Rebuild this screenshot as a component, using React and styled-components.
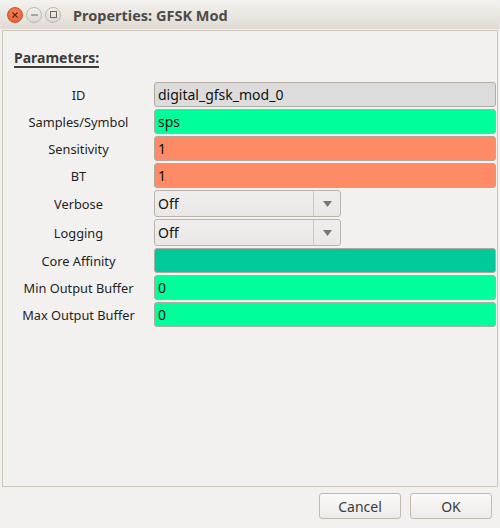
import React from 'react';
import styled, { createGlobalStyle } from 'styled-components';

const Global = createGlobalStyle`
  html, body {
    margin: 0;
    padding: 0;
    background: #f2f1f0;
    font-family: 'Noto Sans', 'DejaVu Sans', sans-serif;
  }
`;

const Window = styled.div`
  width: 500px;
  height: 528px;
  display: flex;
  flex-direction: column;
  background: #f2f1f0;
  overflow: hidden;
`;

const TitleBar = styled.div`
  height: 29px;
  display: flex;
  align-items: center;
  padding-left: 7px;
  background: linear-gradient(#f4f2ef, #dfdad3);
  border-radius: 5px 5px 0 0;
  box-sizing: border-box;
`;

const WinButton = styled.div`
  width: 16px;
  height: 16px;
  border-radius: 50%;
  margin-right: 3px;
  display: flex;
  align-items: center;
  justify-content: center;
  box-sizing: border-box;
  background: ${p => (p.close ? 'radial-gradient(circle at 50% 35%, #f7865d, #e1592c)' : 'linear-gradient(#f3f1ee, #dcd7d0)')};
  border: 1px solid ${p => (p.close ? '#c9532a' : '#bdb6ad')};
`;

const Title = styled.div`
  margin-left: 9px;
  font-weight: bold;
  font-size: 14.5px;
  color: #4d4b47;
`;

const Frame = styled.div`
  margin: 1px 2px 0 2px;
  height: 457px;
  border: 1px solid #cdc4ba;
  box-sizing: border-box;
  padding: 15px 0 0 0;
`;

const Heading = styled.div`
  margin-left: 11px;
  font-weight: bold;
  font-size: 14px;
  color: #3c3c3c;
  display: inline-block;
  border-bottom: 2px solid #3c3c3c;
  line-height: 16px;
`;

const Grid = styled.div`
  margin-top: 14px;
  display: grid;
  grid-template-columns: 151px 1fr;
  row-gap: 2px;
  padding-right: 1px;
`;

const Label = styled.div`
  font-size: 12.8px;
  color: #1f1f1f;
  display: flex;
  align-items: center;
  justify-content: center;
`;

const Field = styled.div`
  height: 25px;
  box-sizing: border-box;
  border: 1px solid #b2aaa1;
  border-radius: 3px;
  background: ${p => p.bg};
  font-size: 14px;
  color: #111;
  display: flex;
  align-items: center;
  padding-left: 3px;
`;

const Combo = styled.div`
  width: 187px;
  height: 27px;
  box-sizing: border-box;
  border: 1px solid #bcb4aa;
  border-radius: 3px;
  background: linear-gradient(#efeeec, #e9e8e6);
  display: flex;
  font-size: 14px;
  color: #111;
`;

const ComboText = styled.div`
  flex: 1;
  display: flex;
  align-items: center;
  padding-left: 3px;
  border-right: 1px solid #cfc8bf;
`;

const ComboArrow = styled.div`
  width: 26px;
  display: flex;
  align-items: center;
  justify-content: center;
`;

const Footer = styled.div`
  display: flex;
  justify-content: flex-end;
  gap: 9px;
  padding: 6px 8px 0 0;
`;

const Button = styled.button`
  width: 82px;
  height: 26px;
  border: 1px solid #c2bab0;
  border-radius: 3px;
  background: linear-gradient(#fbfafa, #edebe8);
  font-family: 'Noto Sans', 'DejaVu Sans', sans-serif;
  font-size: 14px;
  color: #3c3c3c;
  padding: 0;
`;

const Arrow = () => (
  <svg width="9" height="6" viewBox="0 0 9 6">
    <path d="M0 0 L9 0 L4.5 6 Z" fill="#7a7773" />
  </svg>
);

const rows = [
  { label: 'ID', value: 'digital_gfsk_mod_0', bg: '#dcdcdc' },
  { label: 'Samples/Symbol', value: 'sps', bg: '#00fe9a' },
  { label: 'Sensitivity', value: '1', bg: '#fe8a66' },
  { label: 'BT', value: '1', bg: '#fe8a66' },
  { label: 'Verbose', combo: 'Off' },
  { label: 'Logging', combo: 'Off' },
  { label: 'Core Affinity', value: '', bg: '#00c99a' },
  { label: 'Min Output Buffer', value: '0', bg: '#00fe9a' },
  { label: 'Max Output Buffer', value: '0', bg: '#00fe9a' },
];

export default function App() {
  return (
    <Window>
      <Global />
      <TitleBar>
        <WinButton close>
          <svg width="6" height="6" viewBox="0 0 6 6">
            <path d="M0.5 0.5 L5.5 5.5 M5.5 0.5 L0.5 5.5" stroke="#5a2410" strokeWidth="1.2" />
          </svg>
        </WinButton>
        <WinButton>
          <svg width="7" height="2" viewBox="0 0 7 2">
            <path d="M0 1 H7" stroke="#6a6660" strokeWidth="1" />
          </svg>
        </WinButton>
        <WinButton>
          <svg width="7" height="7" viewBox="0 0 7 7">
            <rect x="0.5" y="0.5" width="6" height="6" fill="none" stroke="#6a6660" strokeWidth="1" />
          </svg>
        </WinButton>
        <Title>Properties: GFSK Mod</Title>
      </TitleBar>
      <Frame>
        <Heading>Parameters:</Heading>
        <Grid>
          {rows.map(r => (
            <React.Fragment key={r.label}>
              <Label>{r.label}</Label>
              {r.combo ? (
                <Combo>
                  <ComboText>{r.combo}</ComboText>
                  <ComboArrow>
                    <Arrow />
                  </ComboArrow>
                </Combo>
              ) : (
                <Field bg={r.bg}>{r.value}</Field>
              )}
            </React.Fragment>
          ))}
        </Grid>
      </Frame>
      <Footer>
        <Button>Cancel</Button>
        <Button>OK</Button>
      </Footer>
    </Window>
  );
}
